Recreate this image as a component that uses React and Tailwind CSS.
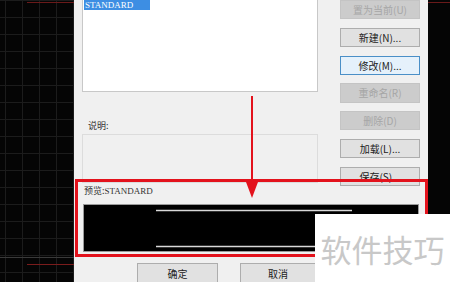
import React from "react";

const font = { fontFamily: '"Noto Sans CJK SC", "Noto Sans", sans-serif' };

const SideButton = ({ label, state }) => {
  const base = "h-5 w-[80px] flex items-center justify-center text-[10px] border";
  if (state === "off") {
    return <div className={`${base} bg-[#cccccc] border-[#c4c4c4] text-[#a6a6a6]`}>{label}</div>;
  }
  if (state === "focus") {
    return <div className={`${base} bg-[#e5f1fb] border-[#4a8fc7] text-[#222]`}>{label}</div>;
  }
  return <div className={`${base} bg-[#e1e1e1] border-[#adadad] text-[#222]`}>{label}</div>;
};

const buttons = [
  { label: "置为当前(U)", state: "off" },
  { label: "新建(N)...", state: "on" },
  { label: "修改(M)...", state: "focus" },
  { label: "重命名(R)", state: "off" },
  { label: "删除(D)", state: "off" },
  { label: "加载(L)...", state: "on" },
  { label: "保存(S)...", state: "on" },
];

const App = () => {
  return (
    <div className="relative w-[450px] h-[282px] bg-black flex overflow-hidden" style={font}>
      {/* left canvas */}
      <div className="relative w-[74px] h-full bg-[#050505] bg-[linear-gradient(to_right,#1c1c1c_1px,transparent_1px),linear-gradient(to_bottom,#1c1c1c_1px,transparent_1px)] bg-[size:17px_17px] bg-[position:5px_0px]">
        <div className="absolute left-[27px] right-0 top-[2px] h-px bg-[#6a1a1a]" />
        <div className="absolute left-0 right-0 top-[257px] h-px bg-[#3a3a3a]" />
        <div className="absolute left-[27px] right-0 top-[264px] h-px bg-[#7a1c1c]" />
      </div>

      {/* dialog */}
      <div className="relative w-[354px] h-full bg-[#f0f0f0] flex flex-col">
        <div className="flex h-[186px]">
          <div className="ml-[8px] w-[236px] flex flex-col">
            <div className="h-[92px] bg-white border border-[#c8c8c8] border-t-0 pl-[1px]">
              <div className="w-[66px] h-[10px] bg-[#3d8ee3] text-white text-[9px] leading-[10px] pl-[1px]" style={{ fontFamily: '"Liberation Serif", serif' }}>
                STANDARD
              </div>
            </div>
            <div className="mt-[28px] ml-[6px] text-[9px] leading-[12px] text-[#333]">说明:</div>
            <div className="mt-[2px] h-[49px] border border-[#dcdcdc]" />
          </div>
          <div className="ml-auto mr-[8px] flex flex-col gap-[8.5px]">
            {buttons.map((b) => (
              <SideButton key={b.label} label={b.label} state={b.state} />
            ))}
          </div>
        </div>

        <div className="px-[9px] flex flex-col">
          <div className="ml-[1px] h-[18px] text-[9px] leading-[10px] text-[#333]">
            预览:<span style={{ fontFamily: '"Liberation Serif", serif' }}>STANDARD</span>
          </div>
          <div className="h-[48px] bg-black border border-[#9a9a9a]">
            <svg width="334" height="46" className="block">
              <line x1="72" y1="5.5" x2="268" y2="5.5" stroke="#d8d8d8" strokeWidth="1.5" />
              <line x1="72" y1="41.5" x2="334" y2="41.5" stroke="#d8d8d8" strokeWidth="1.5" />
            </svg>
          </div>
        </div>

        <div className="mt-auto flex h-[19px]">
          <div className="ml-[63px] w-[81px] h-[20px] bg-[#e1e1e1] border border-[#adadad] flex items-center justify-center text-[10px] text-[#222]">确定</div>
          <div className="ml-[22px] w-[76px] h-[20px] bg-[#e1e1e1] border border-[#adadad] flex items-center justify-center text-[10px] text-[#222]">取消</div>
        </div>

        {/* red annotation box */}
        <div className="absolute left-[1px] top-[179px] w-[353px] h-[78px] border-[3px] border-[#e3121c]" />
        {/* red arrow */}
        <svg className="absolute left-[170px] top-[96px]" width="16" height="104">
          <line x1="8" y1="0" x2="8" y2="90" stroke="#e3121c" strokeWidth="2" />
          <polygon points="2,86 14,86 8,102" fill="#e3121c" />
        </svg>
      </div>

      {/* right canvas */}
      <div className="relative flex-1 h-full bg-[#050505]">
        <div className="absolute left-0 right-0 top-[2px] h-px bg-[#6a1a1a]" />
      </div>

      {/* watermark */}
      <div className="absolute left-[315px] top-[214px] w-[135px] h-[68px] bg-white flex items-center justify-center">
        <span className="text-[31px] leading-none text-[#c8c8c8] tracking-[0px]">软件技巧</span>
      </div>
    </div>
  );
};

export default App;
